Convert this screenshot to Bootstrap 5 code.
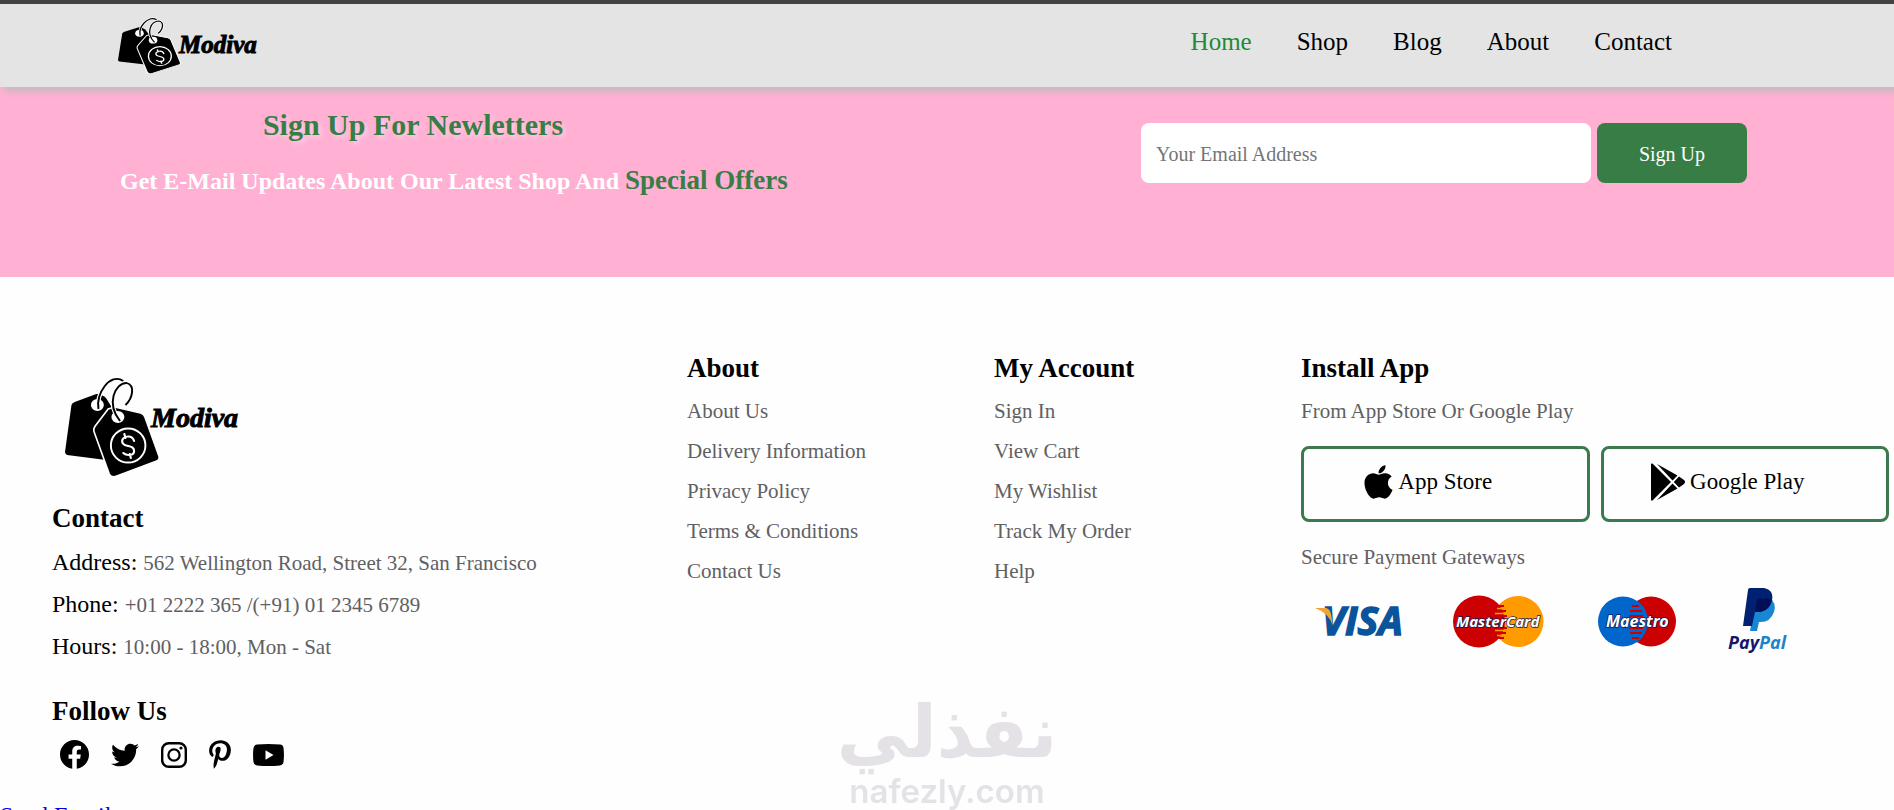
<!DOCTYPE html>
<html lang="en">
<head>
<meta charset="utf-8">
<meta name="viewport" content="width=device-width, initial-scale=1">
<title>Modiva</title>
<link href="https://cdn.jsdelivr.net/npm/bootstrap@5.3.0/dist/css/bootstrap.min.css" rel="stylesheet">
<style>
  body { font-family: "Liberation Serif", "Times New Roman", serif; color: #000; background: #fefefe; height: 100vh; overflow: hidden; }
  a { text-decoration: none; }
  h2, h3, h4 { font-weight: 700; margin: 0; }

  .site-header { background: #e4e4e4; border-top: 4px solid #424242; height: 87px; padding: 0 222px 0 118px; box-shadow: 5px 5px 6px #c9bac2; position: relative; }
  .header-links { gap: 45px; font-size: 25px; line-height: 30px; padding-bottom: 8px; }
  .header-links a { color: #000; }
  .header-links a.active { color: #1f8a37; }
  .header-logo { width: 142px; height: 57px; }

  .newsletter { background: #ffb0d3; height: 190px; padding: 20px 147px 0 120px; }
  .newsletter h2 { font-size: 30px; line-height: 36px; color: #387d46; text-shadow: 3px 3px 5px rgba(255, 255, 255, .4); width: 586px; text-align: center; }
  .newsletter h4 { font-size: 24px; line-height: 36px; color: #fff; margin-top: 19px; }
  .newsletter h4 span { font-size: 27px; color: #387d46; }
  .email-form { gap: 6px; margin-top: 16px; }
  .email-form .form-control { width: 450px; height: 60px; font-size: 20px; border: 0; border-radius: 8px; padding: 2px 15px 0; }
  .email-form .form-control::placeholder { color: #757575; }
  .email-form .btn { width: 150px; height: 60px; font-size: 20px; border-radius: 8px; color: #fff; background: #387d46; border: 0; padding: 2px 0 0; }

  .site-footer { padding: 74px 0 0 52px; }
  .site-footer h4 { font-size: 27px; line-height: 34px; }
  .footer-logo { width: 180px; height: 101px; margin: 25px 0 0 13px; }
  .info-line { font-size: 24px; line-height: 30px; margin: 0 0 11px; }
  .info-line span { font-size: 21px; color: #606063; }
  .follow-title { padding-top: 21px; }
  .foot-list { font-size: 21px; line-height: 24px; margin: 14px 0 0; display: grid; gap: 16px; }
  .foot-list a, .note-text { color: #606063; }
  .note-text { font-size: 21px; line-height: 24px; margin: 14px 0 0; }
  .social { margin: 12px 0 0 8px; height: 29px; gap: 22px; }
  .social a { color: #000; line-height: 0; }
  .stores { gap: 11px; margin: 23px 0; }
  .store-btn { height: 76px; flex: 1 1 0; border: 3px solid #3a7b4d; border-radius: 8px; background: #fefefe; color: #000; font-size: 23px; line-height: 30px; padding: 0 34px 5px 0; }
  .store-btn svg { margin-right: 5px; }
  .install { flex: 0 0 593px; padding-right: 5px; }
  .pay text { font-family: "Open Sans", "Noto Sans", sans-serif; font-weight: 700; font-style: italic; }
  .send-mail { font-size: 24px; line-height: 28px; margin-top: 32px; }
  .send-mail a { color: #0000ee; }
  .brand-word { font-family: "Liberation Serif", serif; font-weight: 700; font-style: italic; }

  .watermark { position: fixed; left: 50%; bottom: 0; transform: translateX(-50%); color: #e4e2e6; text-align: center; pointer-events: none; }
  .watermark .ar { font: 700 72px/80px "DejaVu Sans", sans-serif; }
  .watermark .en { font: 600 33px/38px "Inter", sans-serif; }
</style>
</head>
<body>

<svg width="0" height="0" class="position-absolute" aria-hidden="true">
  <symbol id="tags" viewBox="0 0 88 101" preserveAspectRatio="none">
    <path d="M6 29Q7 27 9 26L29 18Q34 18 38 22L60 60 38 84 2 79Q0 78 0 76Z" fill="#000"/>
    <circle cx="30" cy="29" r="6" fill="#fff"/>
    <path d="M46 31L70 37Q73 38 74 41L87 80Q88 84 85 85L48 100Q43 102 41 98L27 56Q26 53 28 50L40 33Z" fill="#000" stroke="#fff" stroke-width="1.5"/>
    <circle cx="49" cy="41" r="6" fill="#fff"/>
    <path d="M31 33C28 18 42 -4 54 5" fill="none" stroke="#fff" stroke-width="4"/>
    <path d="M31 33C28 18 42 -4 54 5" fill="none" stroke="#000" stroke-width="1.8"/>
    <path d="M51 45C38 28 46 7 57 7C65 9 63 22 56 29" fill="none" stroke="#fff" stroke-width="4"/>
    <path d="M51 45C38 28 46 7 57 7C65 9 63 22 56 29" fill="none" stroke="#000" stroke-width="1.8"/>
    <ellipse cx="58.500" cy="69.500" rx="16" ry="17" fill="none" stroke="#fff" stroke-width="1.8"/>
    <path d="M55 58L56 62M64 65C62 58 52 60 53 66C54 72 64 68 64 75C64 80 57 80 54 77M60 78L61 82" fill="none" stroke="#fff" stroke-width="2" stroke-linecap="round"/>
  </symbol>
</svg>

<header class="site-header d-flex align-items-center justify-content-between">
  <a href="#" aria-label="Modiva">
    <svg class="header-logo d-block" viewBox="0 0 142 57">
      <use href="#tags" width="63" height="57"/>
      <text class="brand-word" x="61" y="36" font-size="25" stroke="#000" stroke-width="1">Modiva</text>
    </svg>
  </a>
  <nav class="header-links d-flex">
    <a href="#" class="active">Home</a><a href="#">Shop</a><a href="#">Blog</a><a href="#">About</a><a href="#">Contact</a>
  </nav>
</header>

<section class="newsletter d-flex justify-content-between align-items-start">
  <div>
    <h2>Sign Up For Newletters</h2>
    <h4>Get E-Mail Updates About Our Latest Shop And <span>Special Offers</span></h4>
  </div>
  <form class="email-form d-flex" onsubmit="return false">
    <input type="email" class="form-control" placeholder="Your Email Address" aria-label="Your Email Address">
    <button class="btn" type="submit">Sign Up</button>
  </form>
</section>

<footer class="site-footer">
  <div class="row g-0">
    <div class="col">
      <svg class="footer-logo d-block" viewBox="0 0 180 101" role="img" aria-label="Modiva">
        <use href="#tags" width="95" height="101"/>
        <text class="brand-word" x="86" y="51" font-size="28" stroke="#000" stroke-width="1">Modiva</text>
      </svg>
      <h4 class="mt-4">Contact</h4>
      <div class="pt-2">
        <p class="info-line pt-1">Address: <span>562 Wellington Road, Street 32, San Francisco</span></p>
        <p class="info-line">Phone: <span>+01 2222 365 /(+91) 01 2345 6789</span></p>
        <p class="info-line">Hours: <span>10:00 - 18:00, Mon - Sat</span></p>
      </div>
      <h4 class="follow-title">Follow Us</h4>
      <div class="social d-flex align-items-center">
        <a href="#" aria-label="Facebook"><svg width="29" height="29" viewBox="8 8 496 496"><path d="M504 256C504 119 393 8 256 8S8 119 8 256c0 123.780 90.690 226.380 209.250 245V327.690h-63V256h63v-54.640c0-62.150 37-96.480 93.670-96.480 27.140 0 55.520 4.840 55.520 4.840v61h-31.280c-30.800 0-40.410 19.120-40.410 38.730V256h68.780l-11 71.690h-57.780V501C413.310 482.380 504 379.780 504 256z"/></svg></a>
        <a href="#" aria-label="Twitter"><svg width="28" height="28" viewBox="0 0 512 512"><path d="M459.370 151.716c.325 4.548.325 9.097.325 13.645 0 138.720-105.583 298.558-298.558 298.558-59.452 0-114.680-17.219-161.137-47.106 8.447.974 16.568 1.299 25.340 1.299 49.055 0 94.213-16.568 130.274-44.832-46.132-.975-84.792-31.188-98.112-72.772 6.498.974 12.995 1.624 19.818 1.624 9.421 0 18.843-1.300 27.614-3.573-48.081-9.747-84.143-51.980-84.143-102.985v-1.299c13.969 7.797 30.214 12.670 47.431 13.319-28.264-18.843-46.781-51.005-46.781-87.391 0-19.492 5.197-37.360 14.294-52.954 51.655 63.675 129.300 105.258 216.365 109.807-1.624-7.797-2.599-15.918-2.599-24.040 0-57.828 46.782-104.934 104.934-104.934 30.213 0 57.502 12.670 76.670 33.137 23.715-4.548 46.456-13.320 66.599-25.340-7.798 24.366-24.366 44.833-46.132 57.827 21.117-2.273 41.584-8.122 60.426-16.243-14.292 20.791-32.161 39.308-52.628 54.253z"/></svg></a>
        <a href="#" aria-label="Instagram"><svg width="26" height="26" viewBox="0 0 26 26"><rect x="1.200" y="1.200" width="23.600" height="23.600" rx="6.500" fill="none" stroke="#000" stroke-width="2.400"/><circle cx="13" cy="13" r="5.600" fill="none" stroke="#000" stroke-width="2.300"/><circle cx="20" cy="6" r="1.600"/></svg></a>
        <a href="#" aria-label="Pinterest"><svg width="22" height="29" viewBox="0 0 384 512"><path d="M204 6.500C101.400 6.500 0 74.900 0 185.600 0 256 39.600 296 63.600 296c9.900 0 15.600-27.600 15.600-35.400 0-9.300-23.700-29.100-23.700-67.800 0-80.400 61.200-137.400 140.400-137.400 68.100 0 118.500 38.700 118.500 109.800 0 53.100-21.300 152.700-90.300 152.700-24.900 0-46.200-18-46.200-43.800 0-37.800 26.400-74.400 26.400-113.400 0-66.200-93.900-54.200-93.900 25.800 0 16.800 2.100 35.400 9.600 50.700-13.800 59.400-42 147.900-42 209.100 0 18.900 2.700 37.500 4.500 56.400 3.400 3.800 1.700 3.400 6.900 1.500 50.400-69 48.600-82.500 71.400-172.800 12.300 23.400 44.100 36 69.300 36 106.200 0 153.900-103.500 153.900-196.800C384 71.300 298.200 6.500 204 6.500z"/></svg></a>
        <a href="#" aria-label="YouTube"><svg width="31" height="22" viewBox="0 0 31 22"><path d="M4 .6Q15.500-.6 27 .6Q30 1 30.500 4Q31.400 11 30.500 18Q30 21 27 21.400Q15.500 22.600 4 21.400Q1 21 .5 18Q-.4 11 .5 4Q1 1 4 .6Z"/><path d="M12.500 6.300L20.500 11L12.500 15.700Z" fill="#fff"/></svg></a>
      </div>
    </div>

    <div class="col-2">
      <h4>About</h4>
      <ul class="foot-list list-unstyled">
        <li><a href="#">About Us</a></li><li><a href="#">Delivery Information</a></li><li><a href="#">Privacy Policy</a></li><li><a href="#">Terms &amp; Conditions</a></li><li><a href="#">Contact Us</a></li>
      </ul>
    </div>

    <div class="col-2">
      <h4>My Account</h4>
      <ul class="foot-list list-unstyled">
        <li><a href="#">Sign In</a></li><li><a href="#">View Cart</a></li><li><a href="#">My Wishlist</a></li><li><a href="#">Track My Order</a></li><li><a href="#">Help</a></li>
      </ul>
    </div>

    <div class="install">
      <h4>Install App</h4>
      <p class="note-text">From App Store Or Google Play</p>
      <div class="stores d-flex">
        <button type="button" class="store-btn d-flex align-items-center justify-content-center">
          <svg width="29" height="34" viewBox="0 28 384 456"><path d="M318.700 268.700c-.2-36.700 16.400-64.400 50-84.800-18.800-26.900-47.200-41.700-84.700-44.600-35.500-2.800-74.300 20.700-88.500 20.700-15 0-49.400-19.700-76.400-19.700C63.300 141.200 4 184.800 4 273.500q0 39.300 14.400 81.200c12.800 36.700 59 126.700 107.200 125.200 25.200-.6 43-17.900 75.800-17.900 31.800 0 48.300 17.900 76.400 17.900 48.600-.7 90.400-82.500 102.600-119.300-65.200-30.700-61.700-90-61.700-91.900zm-56.600-164.200c27.300-32.400 24.800-61.900 24-72.500-24.100 1.400-52 16.400-67.900 34.900-17.500 19.800-27.800 44.300-25.600 71.900 26.100 2 49.900-11.400 69.500-34.300z"/></svg>
          App Store
        </button>
        <button type="button" class="store-btn d-flex align-items-center justify-content-center">
          <svg width="34" height="38" viewBox="0 0 34 38"><path d="M0 1.500Q0 0 1.500 .5L20 19L1.500 37.500Q0 38 0 36.500ZM6 1L26.500 12.500L21.500 17.500ZM28 13.500L33 17Q35 19 33 21L28 24.500L22.800 19ZM26.500 25.500L6 37L21.500 20.500Z"/></svg>
          Google Play
        </button>
      </div>
      <p class="note-text">Secure Payment Gateways</p>
      <svg class="pay d-block mt-3" width="486" height="72" viewBox="1301 584 486 72" role="img" aria-label="Visa, MasterCard, Maestro, PayPal">
        <text x="1322" y="634" font-size="39" fill="#0a549c" stroke="#0a549c" stroke-width="1.500">VISA</text>
        <path d="M1315 607H1326Q1330 608 1331 613L1333 625Q1329 612 1315 607Z" fill="#f2a334"/>
        <circle cx="1518" cy="620.500" r="25.500" fill="#ff9a00"/>
        <circle cx="1479" cy="620.500" r="26" fill="#cc0000"/>
        <path d="M1493 605H1504M1491 610H1506M1491 615H1507M1491 627H1507M1491 632H1506M1493 637H1504" stroke="#cc0000" stroke-width="2.200"/>
        <path d="M1497 607.500H1502M1495 612.500H1504M1495 629.500H1504M1497 634.500H1502" stroke="#ff9a00" stroke-width="1.600"/>
        <text x="1456" y="626" font-size="15" fill="#fff" stroke="#121b58" stroke-width="1.500" paint-order="stroke">MasterCard</text>
        <circle cx="1651" cy="620.500" r="25" fill="#cc0000"/>
        <circle cx="1623" cy="620.500" r="25" fill="#0066cb"/>
        <path d="M1632 605H1639M1630 610H1642M1629 615H1643M1629 627H1643M1630 632H1642M1632 637H1639" stroke="#cc0000" stroke-width="2.200"/>
        <text x="1606" y="626" font-size="16" fill="#fff" stroke="#121b58" stroke-width="1.500" paint-order="stroke">Maestro</text>
        <path d="M1756 596H1769Q1777 602 1774 611Q1770 622 1759 621L1757 630H1750Z" fill="#1986d4"/>
        <path d="M1750 587H1764Q1774 589 1772 599Q1769 612 1755 611L1752 625H1743L1748 589Q1748 587 1750 587Z" fill="#00216f"/>
        <path d="M1757 598Q1766 596 1772 599Q1769 612 1755 611Z" fill="#000f58"/>
        <text x="1728" y="648" font-size="18" fill="#11186e">Pay<tspan fill="#1d83cb">Pal</tspan></text>
      </svg>
    </div>
  </div>
</footer>
<div class="send-mail"><a href="#">Send Email</a></div>

<div class="watermark" aria-hidden="true"><div class="ar" lang="ar" dir="rtl">نفذلي</div><div class="en">nafezly.com</div></div>

<script src="https://cdn.jsdelivr.net/npm/bootstrap@5.3.0/dist/js/bootstrap.bundle.min.js"></script>
</body>
</html>
